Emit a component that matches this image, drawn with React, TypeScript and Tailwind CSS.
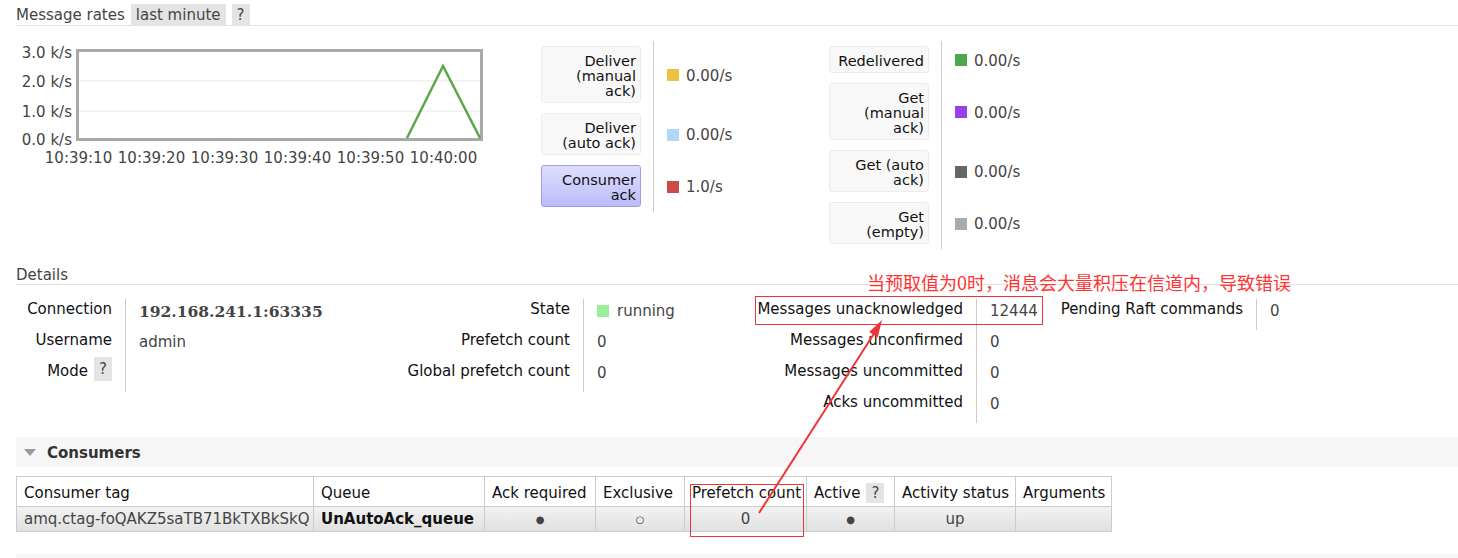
import React from 'react';

const Chip: React.FC<{ children: React.ReactNode; className?: string }> = ({ children, className }) => (
  <span className={`inline-flex items-center bg-[#e4e4e4] px-[5px] text-[#444] ${className ?? ''}`}>{children}</span>
);

type Rate = { label: string[]; value: string; color: string; active?: boolean };

const LegendCol: React.FC<{ rows: Rate[] }> = ({ rows }) => (
  <div className="grid grid-cols-[112px_164px]">
    {rows.map((r, i) => (
      <React.Fragment key={i}>
        <div className="py-[5px] pr-3">
          <div
            className={
              r.active
                ? 'w-[100px] rounded-[3px] border border-[#9d9de8] bg-gradient-to-b from-[#dedeff] to-[#bcbcf8] px-[4px] pt-[7px] pb-[3px] text-right text-[14.5px] leading-[15px] text-[#111]'
                : 'w-[100px] rounded-[3px] border border-[#ececec] bg-[#f8f8f8] px-[4px] pt-[7px] pb-[3px] text-right text-[14.5px] leading-[15px] text-[#111]'
            }
          >
            {r.label.map((l, j) => (
              <div key={j} className="h-[15px]">
                {l}
              </div>
            ))}
          </div>
        </div>
        <div className="flex items-center gap-[7px] border-l border-[#ccc] pl-[13px] pt-[3px] text-[#444]">
          <span className="-mt-[2px] h-[12px] w-[12px]" style={{ background: r.color }} />
          {r.value}
        </div>
      </React.Fragment>
    ))}
  </div>
);

const Chart: React.FC = () => {
  const xs = ['10:39:10', '10:39:20', '10:39:30', '10:39:40', '10:39:50', '10:40:00'];
  const ys = [
    ['3.0 k/s', 12],
    ['2.0 k/s', 41],
    ['1.0 k/s', 71],
    ['0.0 k/s', 99],
  ] as const;
  return (
    <svg width="509" height="130" className="shrink-0" style={{ fontFamily: "'DejaVu Sans', sans-serif", fontSize: 15 }}>
      <line x1="62" y1="40" x2="465" y2="40" stroke="#e8e8e8" />
      <line x1="62" y1="70" x2="465" y2="70" stroke="#e8e8e8" />
      <rect x="61.5" y="9.5" width="404" height="89" fill="none" stroke="#a9a9a9" strokeWidth="3" />
      <polyline points="391,97 427,25 464,97" fill="none" stroke="#58a845" strokeWidth="2.5" />
      {ys.map(([t, y]) => (
        <text key={t} x="56" y={y} dy="5" textAnchor="end" fill="#444">
          {t}
        </text>
      ))}
      {xs.map((t, i) => (
        <text key={t} x={62.5 + i * 73} y="117" dy="5" textAnchor="middle" fill="#444">
          {t}
        </text>
      ))}
    </svg>
  );
};

const Heading: React.FC<{ children: React.ReactNode; className?: string }> = ({ children, className }) => (
  <div className={`ml-4 flex h-[22px] items-center border-b border-[#e2e2e2] text-[#444] ${className ?? ''}`}>{children}</div>
);

const th = 'h-[31px] pr-[13px] pt-[2px] text-right leading-[17px] text-[#111]';
const td = 'h-[31px] border-l border-[#ccc] pl-[13px] pt-[3px] leading-[19px] text-[#444]';

export default function App() {
  const col1: Rate[] = [
    { label: ['Deliver', '(manual', 'ack)'], value: '0.00/s', color: '#edc240' },
    { label: ['Deliver', '(auto ack)'], value: '0.00/s', color: '#afd8f8' },
    { label: ['Consumer', 'ack'], value: '1.0/s', color: '#cb4b4b', active: true },
  ];
  const col2: Rate[] = [
    { label: ['Redelivered'], value: '0.00/s', color: '#4da74d' },
    { label: ['Get', '(manual', 'ack)'], value: '0.00/s', color: '#9440ed' },
    { label: ['Get (auto', 'ack)'], value: '0.00/s', color: '#666666' },
    { label: ['Get', '(empty)'], value: '0.00/s', color: '#aaaaaa' },
  ];

  return (
    <div className="relative h-[558px] w-[1458px] overflow-hidden bg-white font-['DejaVu_Sans',sans-serif] text-[15px]">
      {/* Message rates */}
      <Heading className="mt-[4px]">
        <span className="pt-[2px]">Message rates</span>
        <Chip className="ml-[6px] h-[22px] pt-[2px]">last minute</Chip>
        <Chip className="ml-[6px] h-[22px] pt-[2px]">?</Chip>
      </Heading>
      <div className="ml-4 mt-[15px] flex items-start">
        <Chart />
        <div className="ml-4">
          <LegendCol rows={col1} />
        </div>
        <div className="ml-3">
          <LegendCol rows={col2} />
        </div>
      </div>

      {/* Details */}
      <Heading className="mt-[14px]">
        <span className="pt-[3px]">Details</span>
      </Heading>
      <div className="mt-[14px] ml-4 flex items-start">
        <div className="grid grid-cols-[109px_250px]">
          <div className={th}>Connection</div>
          <div className={`${td} font-['DejaVu_Serif',serif] text-[15.5px] font-bold leading-[20px] text-[#333]`}>192.168.241.1:63335</div>
          <div className={th}>Username</div>
          <div className={td}>admin</div>
          <div className={`${th} flex items-start justify-end`}>
            Mode
            <Chip className="-mt-[6px] ml-[6px] h-[24px] pt-[1px]">?</Chip>
          </div>
          <div className={td} />
        </div>
        <div className="grid grid-cols-[208px_172px]">
          <div className={th}>State</div>
          <div className={`${td} flex items-start gap-[8px]`}>
            <span className="mt-[3px] h-[12px] w-[12px] bg-[#99ee99]" />
            running
          </div>
          <div className={th}>Prefetch count</div>
          <div className={td}>0</div>
          <div className={th}>Global prefetch count</div>
          <div className={td}>0</div>
        </div>
        <div className="grid grid-cols-[221px_66px]">
          <div className={th}>Messages unacknowledged</div>
          <div className={td}>12444</div>
          <div className={th}>Messages unconfirmed</div>
          <div className={td}>0</div>
          <div className={th}>Messages uncommitted</div>
          <div className={td}>0</div>
          <div className={th}>Acks uncommitted</div>
          <div className={td}>0</div>
        </div>
        <div className="grid grid-cols-[214px_60px]">
          <div className={th}>Pending Raft commands</div>
          <div className={td}>0</div>
        </div>
      </div>

      {/* Consumers */}
      <div className="ml-4 mt-[14px] flex h-[30px] items-center bg-[#f6f6f6] pl-[8px]">
        <svg width="12" height="8" viewBox="0 0 12 8" className="mt-[2px]">
          <polygon points="0,0 12,0 6,7" fill="#9a9a9a" />
        </svg>
        <span className="ml-[11px] pt-[3px] font-bold text-[#333]">Consumers</span>
      </div>
      <table className="ml-4 mt-[9px] w-[1095px] table-fixed border-collapse">
        <thead>
          <tr className="h-[30px] text-left text-[#111]">
            {[
              ['Consumer tag', 'w-[297px]'],
              ['Queue', 'w-[171px]'],
              ['Ack required', 'w-[111px]'],
              ['Exclusive', 'w-[89px]'],
              ['Prefetch count', 'w-[122px]'],
              ['Active', 'w-[88px]'],
              ['Activity status', 'w-[121px]'],
              ['Arguments', 'w-[96px]'],
            ].map(([t, w]) => (
              <th key={t} className={`${w} border border-[#ccc] px-[7px] pt-[3px] font-normal whitespace-nowrap`}>
                {t}
                {t === 'Active' && <Chip className="ml-[6px] h-[20px]">?</Chip>}
              </th>
            ))}
          </tr>
        </thead>
        <tbody>
          <tr className="h-[25px] bg-gradient-to-b from-[#f2f2f2] to-[#e0e0e0] text-center text-[#444]">
            <td className="border border-[#ccc] px-[7px] pt-[1px] text-left whitespace-nowrap">amq.ctag-foQAKZ5saTB71BkTXBkSkQ</td>
            <td className="border border-[#ccc] px-[7px] pt-[1px] text-left font-bold text-[#111]">UnAutoAck_queue</td>
            <td className="border border-[#ccc] text-[10px]">●</td>
            <td className="border border-[#ccc] text-[10px]">○</td>
            <td className="border border-[#ccc] pt-[1px]">0</td>
            <td className="border border-[#ccc] text-[10px]">●</td>
            <td className="border border-[#ccc] pt-[1px]">up</td>
            <td className="border border-[#ccc]" />
          </tr>
        </tbody>
      </table>
      <div className="ml-4 mt-[22px] h-[10px] bg-[#f6f6f6]" />

      {/* annotation */}
      <div className="absolute left-[867px] top-[272px] font-['Noto_Sans_CJK_SC',sans-serif] text-[18px] leading-[20px] text-[#f33]">
        当预取值为0时，消息会大量积压在信道内，导致错误
      </div>
      <div className="absolute left-[755px] top-[296px] h-[29px] w-[288px] border-[1.5px] border-[#ee3535]" />
      <div className="absolute left-[690px] top-[484px] h-[53px] w-[114px] border-[1.5px] border-[#ee3535]" />
      <svg className="pointer-events-none absolute left-0 top-0" width="1458" height="558">
        <line x1="759" y1="513" x2="875" y2="332" stroke="#ee3535" strokeWidth="2" />
        <polygon points="882,320 877.6,337.5 869.2,332" fill="#ee3535" />
      </svg>
    </div>
  );
}
